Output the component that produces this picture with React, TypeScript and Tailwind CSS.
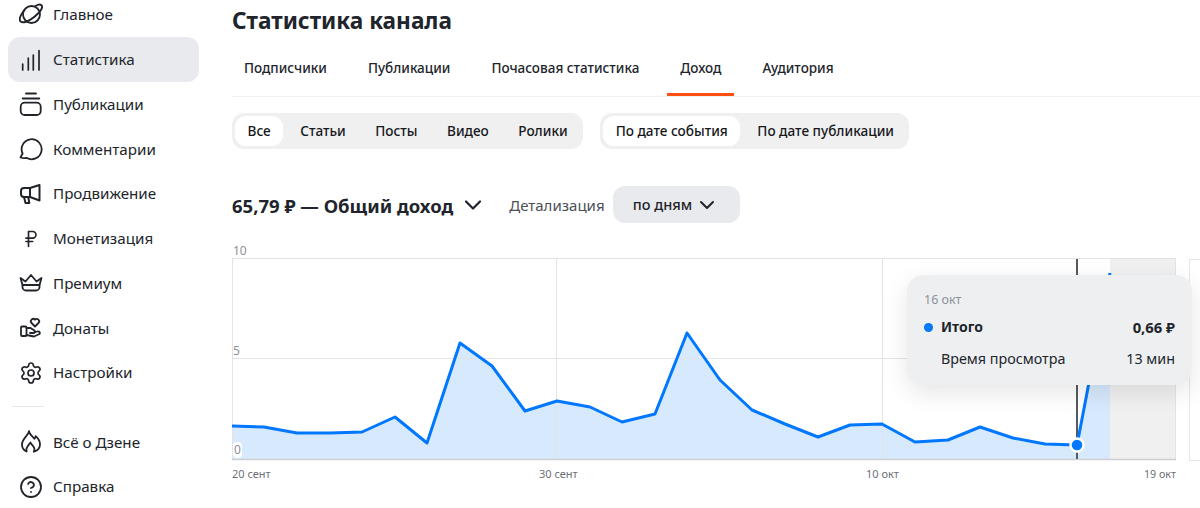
import { ChevronDown, CircleHelp, RussianRuble, Settings } from "lucide-react";
import type { ReactNode } from "react";

const ink = "#21252b";

function Svg({ children }: { children: ReactNode }) {
  return (
    <svg width="24" height="24" viewBox="0 0 24 24" fill="none" stroke={ink} strokeWidth="1.8" strokeLinecap="round" strokeLinejoin="round">
      {children}
    </svg>
  );
}

const PlanetIcon = () => (
  <Svg>
    <circle cx="12.5" cy="11.5" r="8.5" />
    <path d="M5 7.5C2 11.5 0 16 1.2 18c1.800 2.800 8.800.4 14.300-4.200C20.500 9.500 24 4.800 22.800 2.800 21.800 1.200 19 1.600 16.500 3" strokeWidth="2" />
  </Svg>
);

const BarsIcon = () => (
  <Svg>
    <path d="M3.7 16v6M9.3 10v12M14.3 7v15M20 2.500V22" strokeWidth="1.7" />
  </Svg>
);

const StackIcon = () => (
  <Svg>
    <path d="M7 1.500h10M3.700 6.500h16.600" />
    <rect x="1.700" y="10.700" width="20" height="12.300" rx="4" />
  </Svg>
);

const CommentIcon = () => (
  <Svg>
    <path d="M7.500 20.800A10 10 0 1 0 3.600 16.500L1.500 20.500C3.500 21.200 6 21.200 7.500 20.800Z" />
  </Svg>
);

const MegaphoneIcon = () => (
  <Svg>
    <path d="M20.500 3v15.500L11 15H5A3 3 0 0 1 2 12V9a3 3 0 0 1 3-3h6z" strokeWidth="2" />
    <path d="M11 6v9M5 15l1.500 6h3.800l-1-5.500" strokeWidth="2" />
  </Svg>
);

const CrownIcon = () => (
  <Svg>
    <path d="M1.500 7 6.500 10.500 12 4l5.500 6.500L22.500 7l-2 7h-17z" />
    <path d="M3.500 14v2a3.500 3.500 0 0 0 3.500 3.500h10a3.500 3.500 0 0 0 3.500-3.500v-2" />
  </Svg>
);

const DonateIcon = () => (
  <Svg>
    <path d="M16 10.500l-3.500-3.500a2.400 2.400 0 0 1 3.500-3.300 2.400 2.400 0 0 1 3.500 3.300z" />
    <rect x="2" y="10.500" width="5.500" height="9.500" rx="1" />
    <path d="M7.500 12h4l4 2.500a1.500 1.500 0 0 1-1.500 2.500h-3" />
    <path d="M14.500 16.500l4-1c2-.5 3 1.500 2 2.500l-5.500 2.500-7.500-1.500" />
  </Svg>
);

const FlameIcon = () => (
  <Svg>
    <path d="M10 1.500c.5 3.500 4 5 5.300 7.200.8-.7 1.200-1.500 1.400-2.500 2.500 2.300 4.300 5.300 4.300 8 0 3.400-2 6-5.200 7.100" />
    <path d="M10 1.500C9 6 3 8.500 3 14.500c0 3 1.800 5.700 4.500 6.800" />
    <path d="M7.500 21.300C6.500 18 9 15.500 11.500 12.500c1 2.500 4 4 4 6.500 0 1-.2 1.700-.7 2.700" />
  </Svg>
);

const items: { label: string; icon: ReactNode; active?: boolean }[] = [
  { label: "Главное", icon: <PlanetIcon /> },
  { label: "Статистика", icon: <BarsIcon />, active: true },
  { label: "Публикации", icon: <StackIcon /> },
  { label: "Комментарии", icon: <CommentIcon /> },
  { label: "Продвижение", icon: <MegaphoneIcon /> },
  { label: "Монетизация", icon: <RussianRuble size={20} strokeWidth={2} color={ink} /> },
  { label: "Премиум", icon: <CrownIcon /> },
  { label: "Донаты", icon: <DonateIcon /> },
  { label: "Настройки", icon: <Settings size={24} strokeWidth={1.7} color={ink} /> },
];

const bottomItems = [
  { label: "Всё о Дзене", icon: <FlameIcon /> },
  { label: "Справка", icon: <CircleHelp size={24} strokeWidth={1.8} color={ink} /> },
];

function NavRow({ label, icon, active }: { label: string; icon: ReactNode; active?: boolean }) {
  return (
    <div className={`flex h-[44.75px] items-center rounded-xl pl-[11px] pt-[1px] text-[15.2px] text-[#21252b] ${active ? "bg-[#e9eaed]" : ""}`}>
      <span className="flex w-[24px] items-center justify-center">{icon}</span>
      <span className="ml-[10px]">{label}</span>
    </div>
  );
}

const tabs = ["Подписчики", "Публикации", "Почасовая статистика", "Доход", "Аудитория"];
const types = ["Все", "Статьи", "Посты", "Видео", "Ролики"];
const dates = ["По дате события", "По дате публикации"];

function Segments({ options }: { options: string[] }) {
  return (
    <div className="flex h-[36px] items-center gap-[4.5px] rounded-xl bg-[#f0f0f1] p-[3px]">
      {options.map((o, i) => (
        <div
          key={o}
          className={`flex h-[30px] items-center rounded-[11px] px-[12.5px] text-[13.6px] font-medium text-[#16181c] ${i === 0 ? "bg-white" : ""}`}
        >
          {o}
        </div>
      ))}
    </div>
  );
}

// x, y in page pixels, the svg viewBox below maps them back into the chart box
const points = [
  [232, 426], [264, 427], [297, 433], [330, 433], [362, 432], [395, 417], [427, 443], [460, 343],
  [492, 366], [525, 411], [557, 401], [590, 407], [622, 422], [655, 414], [687, 333], [720, 380],
  [752, 410], [785, 424], [818, 437], [850, 425], [882, 424], [915, 442], [948, 440], [980, 427],
  [1013, 438], [1045, 444], [1077, 445], [1110, 273],
];
const line = points.map(([x, y]) => `${x},${y}`).join(" ");

function Chart() {
  return (
    <div className="relative mt-[17px] h-[250px] text-[#8c9098]">
      <svg width="968" height="250" viewBox="232 240 968 250" className="block overflow-visible">
        <rect x="1110" y="259" width="66" height="200" fill="#f0f0f0" />
        <polygon points={`${line} 1110,459 232,459`} fill="#d7e9fd" />
        <path d="M232 258.5H1176M232 358.5H1176M232.5 259V459M556.5 259V459M882.5 259V459M1175.5 259V459" stroke="#e3e3e5" />
        <path d="M232 459.500H1176" stroke="#cfd0d3" strokeWidth="1.5" />
        <path d="M1189 259.5H1200M1189.5 259V460M1189 460.500H1200" stroke="#e6e6e8" />
        <path d="M1077 259V459" stroke="#555a60" strokeWidth="2" />
        <polyline points={line} fill="none" stroke="#0077ff" strokeWidth="3" strokeLinejoin="round" />
        <circle cx="1077" cy="445" r="6.5" fill="#0077ff" stroke="#fff" strokeWidth="2.5" />
      </svg>

      <span className="absolute left-[1px] top-[3px] text-[12px] leading-[16px]">10</span>
      <span className="absolute left-[1px] top-[103px] text-[12px] leading-[16px]">5</span>
      <span className="absolute left-[1px] top-[202px] rounded-sm bg-white px-[1px] text-[12px] leading-[16px]">0</span>

      <span className="absolute left-0 top-[226px] text-[11px] leading-[16px] text-[#6d7178]">20 сент</span>
      <span className="absolute left-[307px] top-[226px] text-[11px] leading-[16px] text-[#6d7178]">30 сент</span>
      <span className="absolute left-[634px] top-[226px] text-[11px] leading-[16px] text-[#6d7178]">10 окт</span>
      <span className="absolute left-[912px] top-[226px] text-[10.7px] leading-[16px] text-[#6d7178]">19 окт</span>

      <div className="absolute left-[675px] top-[35px] h-[110px] w-[285px] rounded-[16px] bg-[#eeeff1] px-[17px] pt-[16px] text-[#21252b] shadow-[0_8px_24px_rgba(0,0,0,0.10)]">
        <div className="text-[12.5px] leading-[18px] text-[#8c9098]">16 окт</div>
        <div className="mt-[8px] flex items-center text-[14px] font-bold leading-[20px]">
          <span className="h-[9px] w-[9px] rounded-full bg-[#0077ff]" />
          <span className="ml-[8px]">Итого</span>
          <span className="ml-auto text-[14.8px]">0,66 ₽</span>
        </div>
        <div className="mt-[12px] flex pl-[17px] text-[14.3px] leading-[20px]">
          <span>Время просмотра</span>
          <span className="ml-auto">13 мин</span>
        </div>
      </div>
    </div>
  );
}

export default function App() {
  return (
    <div className="flex h-[508px] w-[1200px] overflow-hidden bg-white font-['Noto_Sans',sans-serif]">
      <aside className="-mt-[8px] w-[232px] shrink-0 pl-[8px] pr-[33px]">
        {items.map((item) => (
          <NavRow key={item.label} {...item} />
        ))}
        <div className="ml-[4px] mt-[11.5px] h-px w-[32px] bg-[#e6e6e8]" />
        <div className="mt-[12px]">
          {bottomItems.map((item) => (
            <NavRow key={item.label} {...item} />
          ))}
        </div>
      </aside>

      <main className="min-w-0 flex-1">
        <h1 className="mt-[4px] text-[22.6px] font-bold leading-[34px] text-[#21252b]">Статистика канала</h1>

        <div className="mt-[10px] flex h-[49px] gap-[17px] border-b border-[#f0f0f1]">
          {tabs.map((t) => (
            <div key={t} className="relative flex h-[48px] items-center px-[12px] pb-[8px] text-[13.5px] font-medium text-[#21252b]">
              {t}
              {t === "Доход" && <span className="absolute -inset-x-[1px] bottom-0 h-[3px] bg-[#ff4f12]" />}
            </div>
          ))}
        </div>

        <div className="mt-[16px] flex gap-[17px]">
          <Segments options={types} />
          <Segments options={dates} />
        </div>

        <div className="mt-[37px] flex h-[37px] items-center">
          <span className="pt-[2px] text-[18.5px] font-bold text-[#21252b]">65,79 ₽ — Общий доход</span>
          <ChevronDown size={28} strokeWidth={1.9} color={ink} className="ml-[6px] mt-[1px]" />
          <span className="ml-[22px] pt-[2px] text-[15px] text-[#4b4f56]">Детализация</span>
          <div className="ml-[8px] flex h-[37px] w-[127px] items-center justify-center gap-[3px] rounded-xl bg-[#e9eaed] text-[14.5px] font-medium text-[#21252b]">
            <span className="pt-[1px]">по дням</span>
            <ChevronDown size={24} strokeWidth={2} color={ink} />
          </div>
        </div>

        <Chart />
      </main>
    </div>
  );
}
